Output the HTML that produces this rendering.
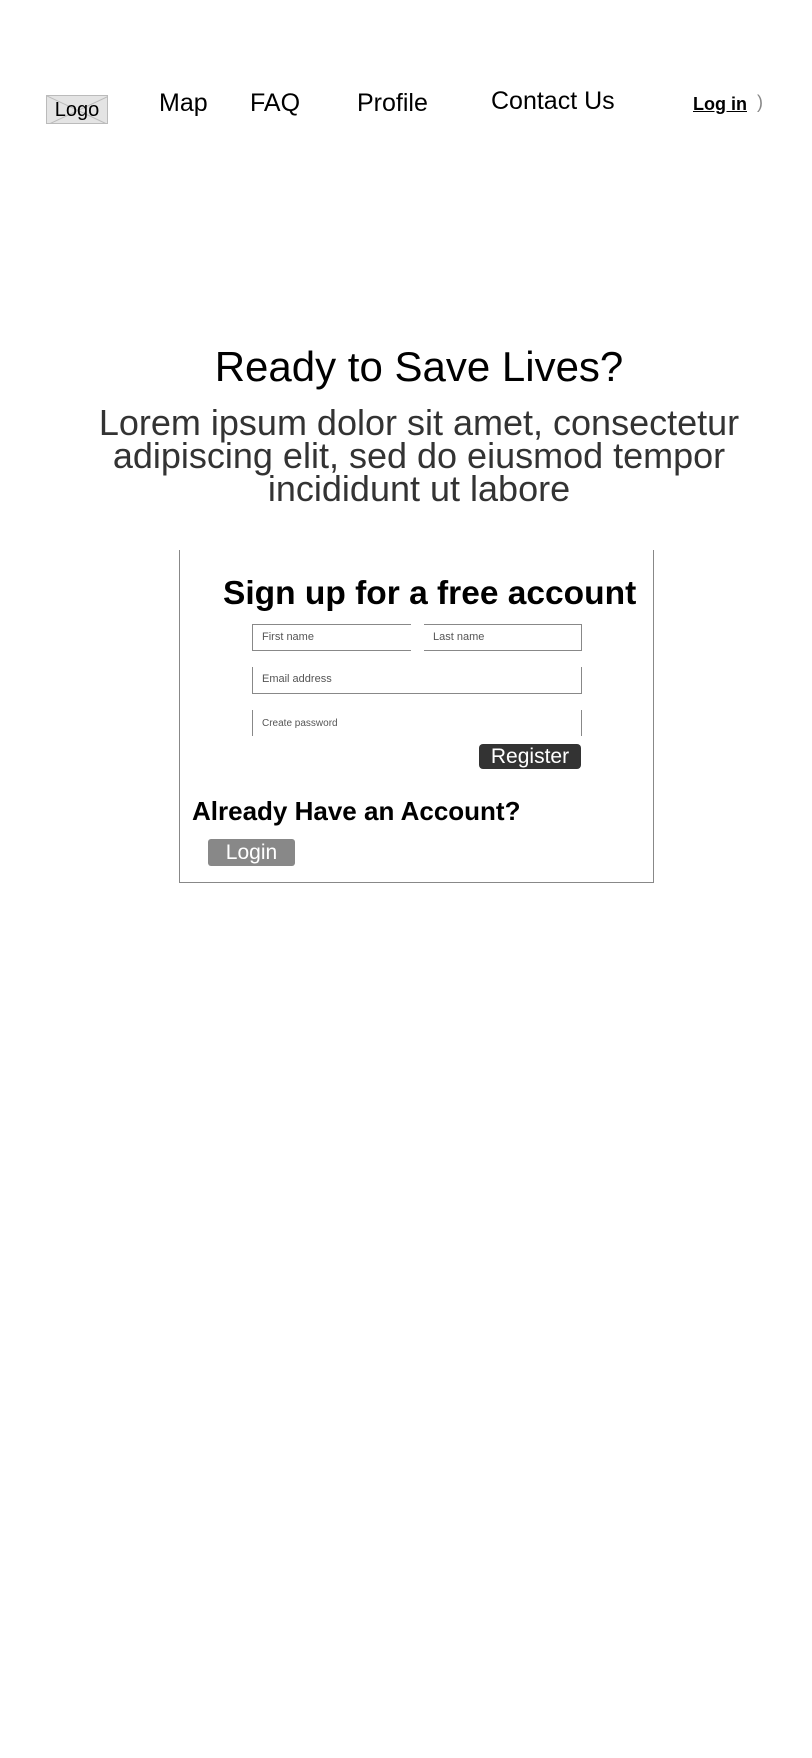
<!DOCTYPE html>
<html><head><meta charset="utf-8"><style>
*{margin:0;padding:0;box-sizing:border-box}
body{width:812px;height:1758px;background:#fff;font-family:"Liberation Sans",sans-serif;position:relative;overflow:hidden;color:#000}
.a{position:absolute;white-space:nowrap}
.nav{font-size:25px;top:88px;line-height:30px}
.logo{left:46px;top:95px;width:62px;height:29px;background:#e4e4e4;border:1px solid #bbb;font-size:20px;text-align:center;line-height:28px;overflow:hidden}
.inp{position:absolute;border:1px solid #888;font-size:11px;color:#555;padding-left:9px;line-height:24px}
</style></head><body>
<div class="a logo"><svg width="62" height="29" style="position:absolute;left:0;top:0"><line x1="0" y1="0" x2="62" y2="29" stroke="#bbb"/><line x1="62" y1="0" x2="0" y2="29" stroke="#bbb"/></svg><span style="position:relative">Logo</span></div>
<div class="a nav" style="left:159px">Map</div>
<div class="a nav" style="left:250px">FAQ</div>
<div class="a nav" style="left:357px">Profile</div>
<div class="a nav" style="left:491px;top:86px">Contact Us</div>
<div class="a" style="left:693px;top:94px;font-size:18px;font-weight:bold;text-decoration:underline">Log in</div>
<div class="a" style="left:757px;top:92px;font-size:18px;color:#888">)</div>

<div class="a" style="left:0;width:838px;text-align:center;top:342px;font-size:42px;line-height:50px">Ready to Save Lives?</div>
<div class="a" style="left:0;width:838px;text-align:center;top:406px;font-size:36px;line-height:33px;color:#333;white-space:normal">Lorem ipsum dolor sit amet, consectetur<br>adipiscing elit, sed do eiusmod tempor<br>incididunt ut labore</div>

<div class="a" style="left:179px;top:550px;width:475px;height:333px;border:1px solid #888;border-top:none"></div>
<div class="a" style="left:223px;top:575px;font-size:33.5px;font-weight:bold;line-height:38px">Sign up for a free account</div>
<div class="inp" style="left:252px;top:624px;width:159px;height:27px;border-right:none">First name</div>
<div class="inp" style="left:424px;top:624px;width:158px;height:27px;border-left:none">Last name</div>
<div class="inp" style="left:252px;top:667px;width:330px;height:27px;border-top:none">Email address</div>
<div class="inp" style="left:252px;top:710px;width:330px;height:26px;border-top:none;border-bottom:none;line-height:28px;font-size:10px">Create password</div>
<div class="a" style="left:479px;top:744px;width:102px;height:25px;background:#333;color:#fff;border-radius:4px;font-size:21px;text-align:center;line-height:25px">Register</div>
<div class="a" style="left:192px;top:796px;font-size:26px;font-weight:bold;line-height:30px">Already Have an Account?</div>
<div class="a" style="left:208px;top:839px;width:87px;height:27px;background:#888;color:#fff;border-radius:3px;font-size:21px;text-align:center;line-height:27px">Login</div>
</body></html>
